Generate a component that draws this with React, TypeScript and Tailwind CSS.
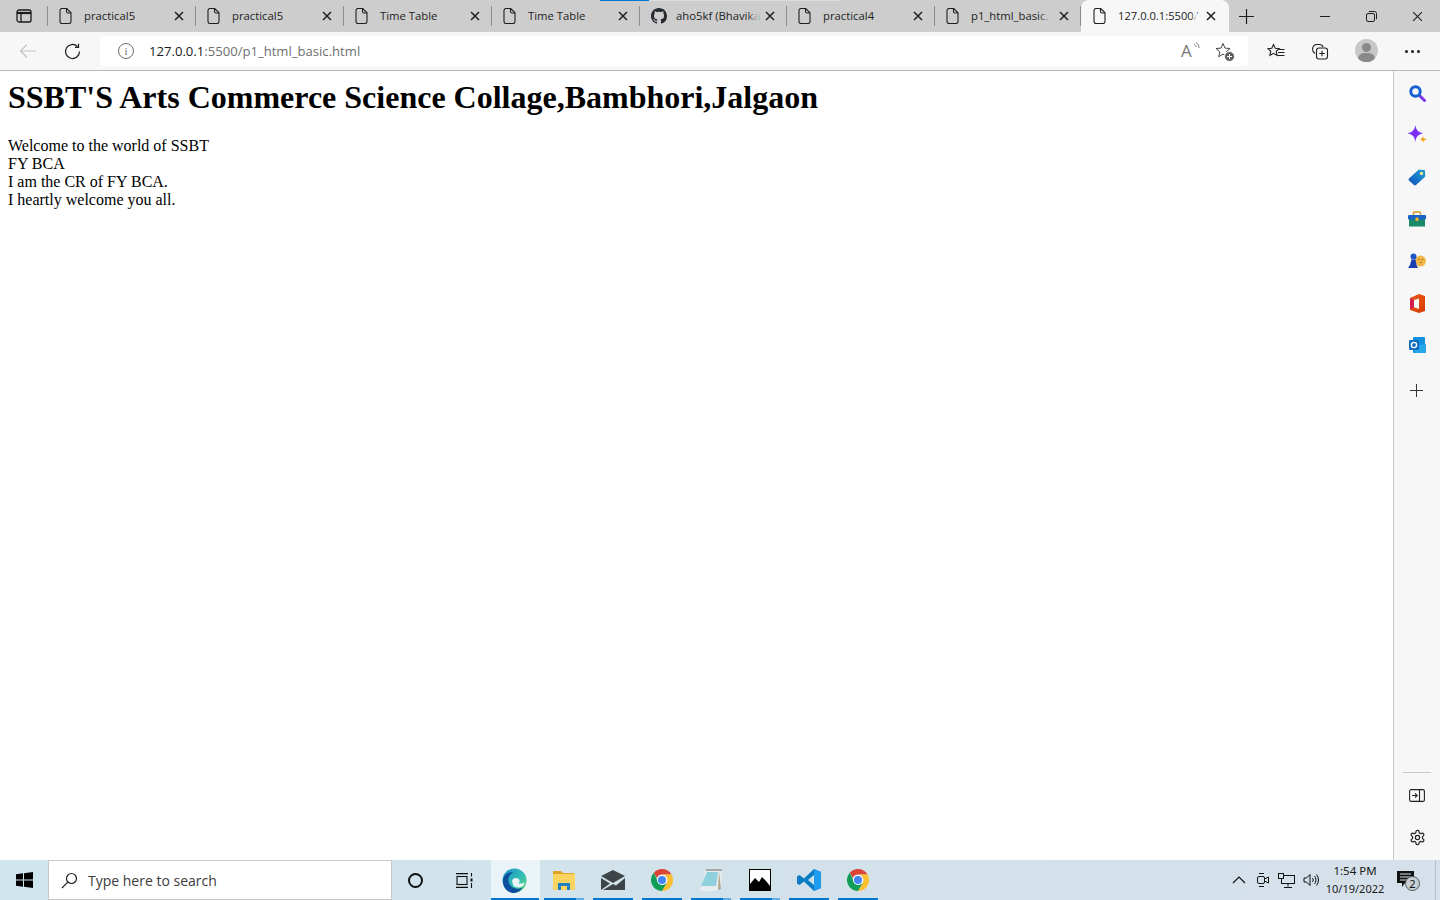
import type { ReactNode } from 'react';

const PageIcon = () => (
  <svg width="13" height="16" viewBox="0 0 13 16" fill="none" stroke="#1f1f1f" strokeWidth="1.1" className="shrink-0">
    <path d="M1 2.500a2 2 0 0 1 2-2h4.700l4.300 4.300v8.700a2 2 0 0 1-2 2H3a2 2 0 0 1-2-2z" />
    <path d="M7.500.7v2.800A1.500 1.500 0 0 0 9 5h2.900" />
  </svg>
);

const GithubIcon = () => (
  <svg width="16" height="16" viewBox="0 0 16 16" fill="#24292f" className="shrink-0">
    <path d="M8 0C3.58 0 0 3.58 0 8c0 3.54 2.29 6.53 5.47 7.59.4.07.55-.17.55-.38 0-.19-.01-.82-.01-1.49-2.01.37-2.53-.49-2.69-.94-.09-.23-.48-.94-.82-1.13-.28-.15-.68-.52-.01-.53.63-.01 1.08.58 1.23.82.72 1.21 1.87.87 2.33.66.07-.52.28-.87.51-1.07-1.78-.2-3.64-.89-3.64-3.95 0-.87.31-1.59.82-2.15-.08-.2-.36-1.02.08-2.12 0 0 .67-.21 2.2.82.64-.18 1.32-.27 2-.27s1.36.09 2 .27c1.53-1.04 2.2-.82 2.2-.82.44 1.1.16 1.92.08 2.12.51.56.82 1.27.82 2.15 0 3.07-1.87 3.75-3.65 3.95.29.25.54.73.54 1.48 0 1.07-.01 1.93-.01 2.2 0 .21.15.46.55.38A8.01 8.01 0 0 0 16 8c0-4.42-3.58-8-8-8z" />
  </svg>
);

const CloseIcon = ({ size = 10, width = 1.5 }: { size?: number; width?: number }) => (
  <svg width={size} height={size} viewBox="0 0 10 10" stroke="#1f1f1f" strokeWidth={width} className="shrink-0">
    <path d="M1 1l8 8M9 1l-8 8" />
  </svg>
);

function Tab({
  title,
  github,
  w = 'w-[148px]',
  gap = 'ml-[9px]',
  fade,
}: {
  title: string;
  github?: boolean;
  w?: string;
  gap?: string;
  fade?: boolean;
}) {
  return (
    <div className={`${w} h-full flex items-center pl-[11px] shrink-0`}>
      {github ? <GithubIcon /> : <PageIcon />}
      <div className={`relative ${github ? 'ml-[9px] w-[83px]' : 'ml-[12px] w-[80px]'} whitespace-nowrap text-[11.3px] text-[#222]`}>
        {title}
        {fade && <div className="absolute right-0 top-0 bottom-0 w-[12px] bg-gradient-to-r from-transparent to-[#cdcdcd]" />}
      </div>
      <div className={`${gap} w-[12px] flex justify-center`}>
        <CloseIcon />
      </div>
      <div className="ml-auto w-px h-[20px] bg-[#8c8c8c]" />
    </div>
  );
}

function TabStrip() {
  return (
    <div className="relative h-[32px] bg-[#cdcdcd] flex items-center shrink-0">
      <div className="absolute top-0 left-[648px] w-[193px] h-px bg-[#dcdcdc]" />
      <div className="absolute top-0 left-[600px] w-[49px] h-px bg-[#0078d4]" />
      <div className="w-[48px] h-full flex items-center justify-center shrink-0 relative">
        <svg width="16" height="14" viewBox="0 0 16 14" fill="none" stroke="#1a1a1a" strokeWidth="1.3">
          <rect x="1" y="1" width="14" height="12" rx="2" />
          <path d="M1 4h14" strokeWidth="2.2" />
          <path d="M5 4v9" />
        </svg>
        <div className="absolute right-0 top-[6px] w-px h-[20px] bg-[#8c8c8c]" />
      </div>
      <Tab title="practical5" />
      <Tab title="practical5" />
      <Tab title="Time Table" />
      <Tab title="Time Table" />
      <Tab title="aho5kf (Bhavika" github fade gap="ml-[5px]" w="w-[147px]" />
      <Tab title="practical4" />
      <Tab title="p1_html_basic." fade gap="ml-[7px]" w="w-[146px]" />
      <div className="w-[148px] h-full bg-[#f7f7f7] rounded-t-[8px] flex items-center pl-[12px] shrink-0">
        <PageIcon />
        <div className="relative ml-[12px] w-[79px] whitespace-nowrap text-[11.2px] text-[#222]">
          127.0.0.1:5500/
          <div className="absolute right-0 top-0 bottom-0 w-[6px] bg-gradient-to-r from-transparent to-[#f7f7f7]" />
        </div>
        <div className="ml-[9px]">
          <CloseIcon />
        </div>
      </div>
      <div className="ml-[9px] w-[16px] flex justify-center">
        <svg width="15" height="15" viewBox="0 0 15 15" stroke="#1f1f1f" strokeWidth="1.2">
          <path d="M7.500 0v15M0 7.500h15" />
        </svg>
      </div>
      <div className="ml-auto flex h-full items-center">
        <div className="w-[46px] flex justify-center">
          <svg width="10" height="10" viewBox="0 0 10 10" stroke="#1f1f1f">
            <path d="M0 5.500h10" />
          </svg>
        </div>
        <div className="w-[46px] flex justify-center">
          <svg width="11" height="11" viewBox="0 0 11 11" fill="none" stroke="#1f1f1f">
            <rect x=".5" y="2.500" width="8" height="8" rx="1.500" />
            <path d="M2.800.5h5.700a2 2 0 0 1 2 2v5.700" />
          </svg>
        </div>
        <div className="w-[46px] flex justify-center">
          <CloseIcon size={11} width={1} />
        </div>
      </div>
    </div>
  );
}

function Toolbar() {
  return (
    <div className="h-[39px] bg-[#f7f7f7] border-b border-[#b8b8b8] flex items-start shrink-0">
      <div className="w-[56px] h-[38px] flex items-center justify-center shrink-0">
        <svg width="18" height="16" viewBox="0 0 18 16" fill="none" stroke="#c4c4c4" strokeWidth="1.2">
          <path d="M17 8H1.500M8 1.500L1.500 8 8 14.500" />
        </svg>
      </div>
      <div className="w-[32px] h-[38px] flex items-center justify-center shrink-0">
        <svg width="17" height="17" viewBox="0 0 17 17" fill="none" stroke="#1f1f1f" strokeWidth="1.25">
          <path d="M15.500 8.500a7 7 0 1 1-2.100-5" />
          <path d="M14.500.8v3.500h-3.500" />
        </svg>
      </div>
      <div className="ml-[12px] mt-[4px] w-[1148px] h-[30px] bg-white rounded-[4px] flex items-center shrink-0">
        <div className="ml-[18px] w-[16px] h-[16px] rounded-full border border-[#6b6b6b] flex items-center justify-center text-[11px] leading-none text-[#6b6b6b] font-['Liberation_Serif',serif]">
          i
        </div>
        <div className="ml-[15px] pt-px text-[13.100px] text-[#6f6f6f]">
          <span className="text-[#1a1a1a]">127.0.0.1</span>:5500/p1_html_basic.html
        </div>
        <div className="ml-auto flex items-center">
          <div className="relative w-[17px] h-[18px] text-[17px] leading-[18px] text-[#777]">
            A
            <svg width="7" height="9" viewBox="0 0 7 9" fill="none" stroke="#777" className="absolute right-[-2px] top-0">
              <path d="M1 2c1.200.8 1.800 1.800 2 3M3 .5c1.800 1 3 3 3 5.500" />
            </svg>
          </div>
          <div className="relative ml-[17px] mr-[15px] w-[18px] h-[18px]">
            <svg width="18" height="18" viewBox="0 0 18 18" fill="none" stroke="#444">
              <path d="M8 1.500l2 4.600 5 .4-3.800 3.300 1.100 4.900L8 12.100l-4.300 2.600 1.100-4.900L1 6.500l5-.4z" />
            </svg>
            <div className="absolute right-[-2px] bottom-[-2px] w-[11px] h-[11px] rounded-full bg-[#5f5f5f] border border-white flex items-center justify-center">
              <svg width="5" height="5" viewBox="0 0 5 5" stroke="#fff">
                <path d="M2.500 0v5M0 2.500h5" />
              </svg>
            </div>
          </div>
        </div>
      </div>
      <div className="ml-[19px] h-[38px] w-[18px] flex items-center justify-center shrink-0">
        <svg width="18" height="17" viewBox="0 0 18 17" fill="none" stroke="#1f1f1f" strokeWidth="1.1">
          <path d="M6.500 1.500l1.700 3.700 4 .4-3 2.700.9 4.100-3.600-2.100-3.600 2.100.9-4.100-3-2.700 4-.4z" />
          <path d="M12 6.500h5.500M11 9.500h6.500M10.500 12.500h7" />
        </svg>
      </div>
      <div className="ml-[26px] h-[38px] w-[18px] flex items-center justify-center shrink-0">
        <svg width="18" height="17" viewBox="0 0 18 17" fill="none" stroke="#1f1f1f" strokeWidth="1.1">
          <path d="M4 10.500c-1.500-1-2.500-3-2.500-4.500 0-2.500 2-4.500 4-4.500h3c1.500 0 3 1 3.500 2.500" />
          <rect x="5.500" y="5" width="11" height="11" rx="2.500" />
          <path d="M11 7.800v5.400M8.300 10.500h5.400" />
        </svg>
      </div>
      <div className="ml-[26px] mt-[7px] w-[23px] h-[23px] rounded-full bg-[#c8c8c8] overflow-hidden relative shrink-0">
        <div className="absolute left-[7px] top-[4px] w-[9px] h-[9px] rounded-full bg-[#8a8a8a]" />
        <div className="absolute left-[3px] top-[14px] w-[17px] h-[12px] rounded-full bg-[#8a8a8a]" />
      </div>
      <div className="ml-[26px] h-[38px] w-[16px] flex items-center justify-center gap-[3px] shrink-0">
        <div className="w-[3px] h-[3px] rounded-full bg-[#1f1f1f]" />
        <div className="w-[3px] h-[3px] rounded-full bg-[#1f1f1f]" />
        <div className="w-[3px] h-[3px] rounded-full bg-[#1f1f1f]" />
      </div>
    </div>
  );
}

const SideSlot = ({ children }: { children: ReactNode }) => (
  <div className="h-[42px] w-full flex items-center justify-center shrink-0">{children}</div>
);

function Sidebar() {
  return (
    <div className="w-[47px] bg-[#f7f7f7] border-l border-[#c8c8c8] flex flex-col items-center pt-px shrink-0">
      <SideSlot>
        <svg width="17" height="17" viewBox="0 0 17 17" fill="none">
          <path d="M10.500 10.500l5 5" stroke="#7c3aed" strokeWidth="3" strokeLinecap="round" />
          <circle cx="6.500" cy="6.500" r="4.700" stroke="#1560d4" strokeWidth="3" />
        </svg>
      </SideSlot>
      <SideSlot>
        <svg width="20" height="20" viewBox="0 0 18 18">
          <path d="M7.500 0c.6 4.400 2.400 6.400 7 7.500-4.600 1.100-6.400 3.100-7 8-.6-4.900-2.400-6.900-7-8C5.100 6.400 6.900 4.400 7.500 0z" fill="#7b2ff2" />
          <path d="M14.500 10c.3 1.700 1 2.300 3 3-2 .6-2.700 1.300-3 3-.3-1.700-1-2.400-3-3 2-.7 2.700-1.300 3-3z" fill="#f5a623" />
        </svg>
      </SideSlot>
      <SideSlot>
        <svg width="18" height="17" viewBox="0 0 18 17">
          <defs>
            <linearGradient id="tag" x1="0" y1="1" x2="1" y2="0">
              <stop offset="0" stopColor="#1450b8" />
              <stop offset="1" stopColor="#1a9fd6" />
            </linearGradient>
          </defs>
          <path d="M1 9.500L10 1.200c.3-.3.700-.4 1-.4l5 .2c.6 0 1 .5 1 1l.2 5c0 .4-.1.700-.4 1L8 16c-.6.6-1.400.6-2 0L1 11.500c-.6-.6-.6-1.400 0-2z" fill="url(#tag)" />
          <circle cx="13.500" cy="4.500" r="1.700" fill="#fbe08a" />
        </svg>
      </SideSlot>
      <SideSlot>
        <svg width="18" height="16" viewBox="0 0 18 16" fill="none">
          <path d="M5.500 4V2a1 1 0 0 1 1-1h5a1 1 0 0 1 1 1v2" stroke="#d69a1e" strokeWidth="1.400" />
          <rect x="1" y="8" width="16" height="7.500" fill="#1a8a6a" />
          <rect x="0" y="4" width="18" height="4.500" rx="1" fill="#1a63c4" />
          <rect x="7.500" y="6.500" width="3" height="3.500" rx=".8" fill="#f2b632" />
        </svg>
      </SideSlot>
      <SideSlot>
        <svg width="18" height="16" viewBox="0 0 18 16">
          <circle cx="12.500" cy="8" r="5.500" fill="#f0b94a" />
          <circle cx="5.500" cy="3.500" r="3" fill="#1a58c8" />
          <path d="M3.500 6.500h4L8.500 12l1.500 3H0l2-3z" fill="#1a3fb0" />
          <circle cx="11" cy="6.500" r=".8" fill="#a86a10" />
          <circle cx="14.500" cy="6.500" r=".8" fill="#a86a10" />
          <circle cx="13" cy="9.500" r=".8" fill="#a86a10" />
        </svg>
      </SideSlot>
      <SideSlot>
        <svg width="16" height="19" viewBox="0 0 16 19">
          <defs>
            <linearGradient id="office" x1="0" y1="0" x2="1" y2="1">
              <stop offset="0" stopColor="#ec5a1c" />
              <stop offset="1" stopColor="#d83b01" />
            </linearGradient>
          </defs>
          <path d="M1 4l9-4 6 2v15l-6 2-9-3z" fill="url(#office)" />
          <path d="M5 6l5-1.500V15l-5-1.800z" fill="#f7f7f7" />
          <path d="M1 4l4 2v7.200L1 15z" fill="#d21f4e" />
        </svg>
      </SideSlot>
      <SideSlot>
        <svg width="17" height="17" viewBox="0 0 17 17">
          <rect x="4" y="0" width="12" height="16" rx="1" fill="#1490df" />
          <path d="M6 9l11-2v9H6z" fill="#28a8ea" />
          <rect x="0" y="3" width="10" height="10" rx="1.200" fill="#0f6cbd" />
          <circle cx="5" cy="8" r="2.600" fill="none" stroke="#fff" strokeWidth="1.400" />
        </svg>
      </SideSlot>
      <div className="h-[48px] w-full flex items-center justify-center pr-px shrink-0">
        <svg width="13" height="13" viewBox="0 0 13 13" stroke="#333">
          <path d="M6.500 0v13M0 6.500h13" />
        </svg>
      </div>
      <div className="mt-auto w-[28px] h-px bg-[#c8c8c8] mb-[1px]" />
      <SideSlot>
        <svg width="16" height="13" viewBox="0 0 16 13" fill="none" stroke="#222" strokeWidth="1.100">
          <rect x=".6" y=".6" width="14.800" height="11.800" rx="1.500" />
          <path d="M10.500.6v11.800M3 6.500h5M6 4.300l2.200 2.200L6 8.700" />
        </svg>
      </SideSlot>
      <SideSlot>
        <svg width="17" height="17" viewBox="0 0 24 24" fill="none" stroke="#222" strokeWidth="1.700">
          <path d="M12.220 2h-.44a2 2 0 0 0-2 2v.18a2 2 0 0 1-1 1.730l-.43.25a2 2 0 0 1-2 0l-.15-.08a2 2 0 0 0-2.730.73l-.22.380a2 2 0 0 0 .73 2.730l.15.100a2 2 0 0 1 1 1.720v.510a2 2 0 0 1-1 1.740l-.15.090a2 2 0 0 0-.73 2.730l.22.380a2 2 0 0 0 2.730.73l.15-.08a2 2 0 0 1 2 0l.43.25a2 2 0 0 1 1 1.730V20a2 2 0 0 0 2 2h.44a2 2 0 0 0 2-2v-.18a2 2 0 0 1 1-1.730l.43-.25a2 2 0 0 1 2 0l.15.080a2 2 0 0 0 2.730-.73l.22-.390a2 2 0 0 0-.73-2.730l-.15-.080a2 2 0 0 1-1-1.740v-.500a2 2 0 0 1 1-1.740l.15-.090a2 2 0 0 0 .73-2.730l-.22-.380a2 2 0 0 0-2.730-.73l-.15.080a2 2 0 0 1-2 0l-.43-.25a2 2 0 0 1-1-1.730V4a2 2 0 0 0-2-2z" />
          <circle cx="12" cy="12" r="3" />
        </svg>
      </SideSlot>
      <div className="h-[2px] shrink-0" />
    </div>
  );
}

const ChromeIcon = () => (
  <svg width="24" height="24" viewBox="0 0 24 24">
    <path d="M12 1a11 11 0 0 1 9.530 5.500H12a5.500 5.500 0 0 0-5.100 3.450L3.800 4.700A11 11 0 0 1 12 1z" fill="#db4437" />
    <path d="M21.530 6.500A11 11 0 0 1 12 23l4.760-8.250A5.500 5.500 0 0 0 16.760 9.200 5.500 5.500 0 0 0 12 6.500z" fill="#fbc02d" />
    <path d="M12 23A11 11 0 0 1 3.800 4.700l4.440 9.900A5.500 5.500 0 0 0 16.760 14.750z" fill="#0f9d58" />
    <circle cx="12" cy="12" r="5" fill="#fff" />
    <circle cx="12" cy="12" r="4" fill="#4285f4" />
  </svg>
);

function AppSlot({ children, split, active }: { children: ReactNode; split?: boolean; active?: boolean }) {
  return (
    <div className={`relative w-[49px] h-full flex items-center justify-center pr-[2px] shrink-0 ${active ? 'bg-[#eaf3f8]' : ''}`}>
      {children}
      {active ? (
        <div className="absolute bottom-0 left-0 w-[48px] h-[2px] bg-[#0078d4]" />
      ) : (
        <div className="absolute bottom-0 left-[4px] w-[40px] h-[2px] flex">
          <div className={split ? 'w-[32px] bg-[#0078d4]' : 'w-[40px] bg-[#0078d4]'} />
          {split && <div className="w-[8px] bg-[#62aee6]" />}
        </div>
      )}
    </div>
  );
}

function Taskbar() {
  return (
    <div className="h-[40px] flex items-stretch bg-gradient-to-r from-[#cfe6ee] via-[#d2e2ea] to-[#d6e0ea] shrink-0 font-['Noto_Sans',sans-serif]">
      <div className="w-[48px] flex items-center justify-center shrink-0">
        <svg width="17" height="16" viewBox="0 0 17 16" fill="#000">
          <path d="M0 2.300l7-1v6.300H0zM8 1.200L17 0v7.600H8zM0 8.400h7v6.300l-7-1zM8 8.400h9V16l-9-1.200z" />
        </svg>
      </div>
      <div className="w-[344px] bg-white border border-[#c9c9c9] flex items-center shrink-0">
        <svg width="17" height="17" viewBox="0 0 17 17" fill="none" stroke="#222" strokeWidth="1.200" className="ml-[12px]">
          <circle cx="10.500" cy="6.500" r="5" />
          <path d="M6.800 10.200L1 16" />
        </svg>
        <span className="ml-[10px] text-[14px] text-[#3b3b3b] font-['Open_Sans',sans-serif]">Type here to search</span>
      </div>
      <div className="w-[48px] pr-[1px] flex items-center justify-center shrink-0">
        <div className="w-[15px] h-[15px] rounded-full border-[2.500px] border-[#111]" />
      </div>
      <div className="w-[51px] pr-[2px] flex items-center justify-center shrink-0">
        <svg width="17" height="15" viewBox="0 0 17 15" fill="none" stroke="#111" strokeWidth="1.100">
          <path d="M0 .6h12M0 14.400h12" />
          <rect x="1" y="3.500" width="10" height="8" />
          <rect x="14.500" y="5.500" width="2" height="3" fill="#111" stroke="none" />
          <path d="M15.500 0v3.500M15.500 10v5" />
        </svg>
      </div>
      <AppSlot active>
        <svg width="25" height="25" viewBox="0 0 25 25">
          <defs>
            <linearGradient id="edgeA" x1="0" y1="0" x2="1" y2="1">
              <stop offset="0" stopColor="#1a8fd0" />
              <stop offset=".6" stopColor="#35c1b0" />
              <stop offset="1" stopColor="#6fd86a" />
            </linearGradient>
          </defs>
          <circle cx="12.500" cy="12.500" r="12" fill="url(#edgeA)" />
          <path d="M1 12C2 6 7 3.500 11 4.500 6.500 7 5.500 11 7 15c1.500 4 6 6.500 11 5.500.9-.2 1.800-.5 2.500-.9-2 3.400-5 5.400-8.500 5.400C5 25 .5 19 1 12z" fill="#0b4f9e" />
          <path d="M10 13.500c0-2 1.500-3.500 4-3.500 2 0 3 1 3.500 2.500.6 1.500-.5 2-1 2.500 1.500 1 4.500.7 6.500-.5-1 3-3.500 5-7 5-3.500 0-6-3-5.500-6z" fill="#eaf3f8" />
        </svg>
      </AppSlot>
      <AppSlot split>
        <svg width="22" height="20" viewBox="0 0 22 20">
          <path d="M0 2a1 1 0 0 1 1-1h7l2 2h11v2H0z" fill="#e0a526" />
          <rect x="0" y="4" width="22" height="16" rx="1" fill="#fbd35f" />
          <path d="M5 20v-7h12v7h-3v-4H8v4z" fill="#1f7fc4" />
        </svg>
      </AppSlot>
      <AppSlot>
        <svg width="24" height="20" viewBox="0 0 24 20" fill="#3e4549">
          <path d="M0 6L12 0l12 6-12 7z" />
          <path d="M0 8l9 5.500L0 20zM24 8v12H2l10-6 3 1.500z" />
        </svg>
      </AppSlot>
      <AppSlot>
        <ChromeIcon />
      </AppSlot>
      <AppSlot split>
        <svg width="24" height="24" viewBox="0 0 24 24">
          <path d="M7 1h16l-1 20-8 2H1z" fill="#e7ecee" />
          <path d="M8 4h11l-2 14H2z" fill="#8fd0dd" />
          <path d="M20 3l2 18-3 1z" fill="#b0a98f" />
          <path d="M7 1h16v2H7z" fill="#a7a7a7" />
        </svg>
      </AppSlot>
      <AppSlot split>
        <svg width="22" height="22" viewBox="0 0 22 22">
          <rect x=".5" y=".5" width="21" height="21" fill="#fff" stroke="#000" />
          <path d="M1 21V15l5-6 4 4 3-5 4 4 4 5v4z" fill="#000" />
        </svg>
      </AppSlot>
      <AppSlot>
        <svg width="24" height="24" viewBox="0 0 24 24">
          <path d="M17 1l7 3v16l-7 3L7 13.500 2.500 17 0 15.500v-7L2.500 7 7 10.500zM17 7l-6 5 6 5z" fill="#0a7cc4" />
          <path d="M17 1l7 3v16l-7 3z" fill="#1f9cf0" />
        </svg>
      </AppSlot>
      <AppSlot>
        <ChromeIcon />
      </AppSlot>
      <div className="ml-auto flex items-center">
        <svg width="14" height="8" viewBox="0 0 14 8" fill="none" stroke="#111" strokeWidth="1.200">
          <path d="M1 7l6-6 6 6" />
        </svg>
        <svg width="14" height="16" viewBox="0 0 14 16" fill="none" stroke="#111" className="ml-[10px]">
          <rect x="1.500" y="4.500" width="7" height="7" rx="1.500" />
          <path d="M8.500 7l4-2v6l-4-2M3 1.500h5M3 14.500h5" />
        </svg>
        <svg width="17" height="15" viewBox="0 0 17 15" fill="none" stroke="#111" className="ml-[8px]">
          <rect x="3.500" y="2.500" width="13" height="8" />
          <rect x=".5" y=".5" width="5" height="5" fill="#d3e1ea" />
          <path d="M10 10.500v3M6 14.500h8" />
        </svg>
        <svg width="16" height="14" viewBox="0 0 16 14" fill="none" stroke="#111" className="ml-[8px]">
          <path d="M1 5h2.500L7 1.500v11L3.500 9H1z" />
          <path d="M9.500 5a3 3 0 0 1 0 4M11.500 3a6 6 0 0 1 0 8M13.500 1.500a8.500 8.500 0 0 1 0 11" />
        </svg>
        <div className="w-[72px] flex flex-col items-center leading-[18px] text-[#1a1a1a]">
          <span className="text-[11.500px]">1:54 PM</span>
          <span className="text-[11px]">10/19/2022</span>
        </div>
        <div className="relative ml-[6px] w-[24px] h-[24px]">
          <svg width="17" height="16" viewBox="0 0 17 16" className="absolute left-0 top-[3px]">
            <path d="M0 0h17v12H8l-3 4v-4H0z" fill="#111" />
            <path d="M3 3h11M3 6h11M3 9h7" stroke="#d3e1ea" />
          </svg>
          <div className="absolute left-[8px] top-[8px] w-[15px] h-[15px] rounded-full bg-[#c7d0d6] border border-[#555] flex items-center justify-center text-[11px] leading-none text-[#111]">
            2
          </div>
        </div>
        <div className="ml-[14px] mr-[4px] w-px h-full bg-[#b5c2cb]" />
      </div>
    </div>
  );
}

export default function App() {
  return (
    <div className="w-[1440px] h-[900px] overflow-hidden flex flex-col bg-white font-['Open_Sans',sans-serif]">
      <TabStrip />
      <Toolbar />
      <div className="flex flex-1 min-h-0">
        <main className="flex-1 px-2 font-['Liberation_Serif',serif] text-black">
          <h1 className="mt-2 mb-[21px] text-[32px] leading-[37px] font-bold">
            SSBT'S Arts Commerce Science Collage,Bambhori,Jalgaon
          </h1>
          <div className="text-[16px] leading-[18px]">
            Welcome to the world of SSBT
            <br />
            FY BCA
            <br />
            I am the CR of FY BCA.
            <br />
            I heartly welcome you all.
          </div>
        </main>
        <Sidebar />
      </div>
      <Taskbar />
    </div>
  );
}
